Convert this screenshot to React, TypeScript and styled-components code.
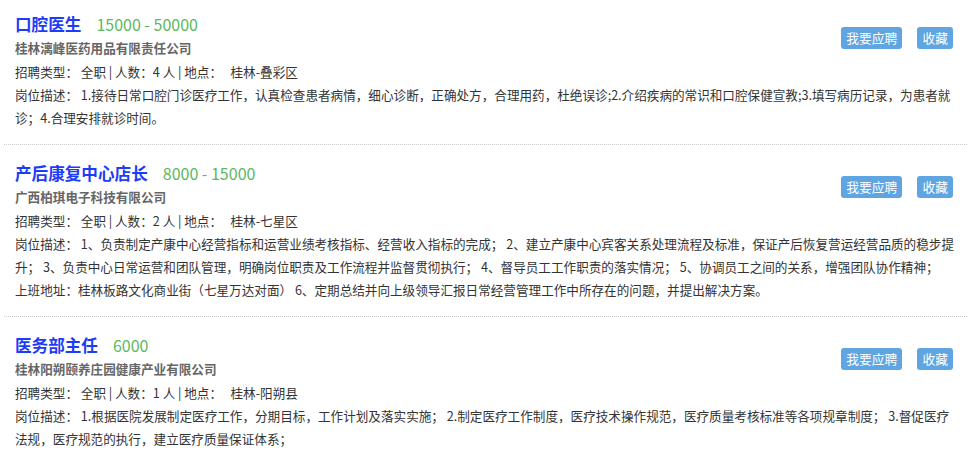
import React from 'react';
import styled, { createGlobalStyle } from 'styled-components';

interface Job {
  title: string;
  salary: string;
  company: string;
  count: number;
  place: string;
  desc: React.ReactNode;
}

const jobs: Job[] = [
  {
    title: '口腔医生',
    salary: '15000 - 50000',
    company: '桂林漓峰医药用品有限责任公司',
    count: 4,
    place: '桂林-叠彩区',
    desc: '1.接待日常口腔门诊医疗工作，认真检查患者病情，细心诊断，正确处方，合理用药，杜绝误诊;2.介绍疾病的常识和口腔保健宣教;3.填写病历记录，为患者就诊；4.合理安排就诊时间。',
  },
  {
    title: '产后康复中心店长',
    salary: '8000 - 15000',
    company: '广西柏琪电子科技有限公司',
    count: 2,
    place: '桂林-七星区',
    desc: (
      <>
        1、负责制定产康中心经营指标和运营业绩考核指标、经营收入指标的完成； 2、建立产康中心宾客关系处理流程及标准，保证产后恢复营运经营品质的稳步提升；
        3、负责中心日常运营和团队管理，明确岗位职责及工作流程并监督贯彻执行； 4、督导员工工作职责的落实情况； 5、协调员工之间的关系，增强团队协作精神；
        <br />
        上班地址：桂林板路文化商业街（七星万达对面） 6、定期总结并向上级领导汇报日常经营管理工作中所存在的问题，并提出解决方案。
      </>
    ),
  },
  {
    title: '医务部主任',
    salary: '6000',
    company: '桂林阳朔颐养庄园健康产业有限公司',
    count: 1,
    place: '桂林-阳朔县',
    desc: '1.根据医院发展制定医疗工作，分期目标，工作计划及落实实施； 2.制定医疗工作制度，医疗技术操作规范，医疗质量考核标准等各项规章制度； 3.督促医疗法规，医疗规范的执行，建立医疗质量保证体系；',
  },
];

const App = () => {
  return (
    <>
      <GlobalStyle />
      <JobList>
        {jobs.map((job) => (
          <JobItem key={job.title}>
            <TitleRow>
              <JobTitle>{job.title}</JobTitle>
              <Salary>{job.salary}</Salary>
            </TitleRow>
            <Company>{job.company}</Company>
            <Actions>
              <ActionButton>我要应聘</ActionButton>
              <ActionButton>收藏</ActionButton>
            </Actions>
            <InfoLine>
              招聘类型：&nbsp;全职 | 人数：{job.count} 人 | 地点：&nbsp;&nbsp;&nbsp;{job.place}
            </InfoLine>
            <InfoLine>岗位描述：&nbsp;{job.desc}</InfoLine>
          </JobItem>
        ))}
      </JobList>
    </>
  );
};

const GlobalStyle = createGlobalStyle`
  body {
    margin: 0;
    background: #fff;
    color: #333;
    font-family: "Noto Sans CJK SC", "Noto Sans", sans-serif;
  }
`;

const JobList = styled.ul`
  list-style: none;
  margin: 0;
  padding: 0 4px;
`;

const JobItem = styled.li`
  display: grid;
  grid-template-columns: 1fr auto;
  padding: 16px 7px 15px 11px;
  border-bottom: 1px dotted #ccc;

  &:first-child {
    padding-top: 12px;
  }
  &:last-child {
    border-bottom: none;
  }
`;

const TitleRow = styled.div`
  grid-column: 1;
  display: flex;
  align-items: baseline;
  height: 24px;
  line-height: 24px;
`;

const JobTitle = styled.span`
  font-size: 16.6px;
  font-weight: bold;
  color: #1d3cf7;
`;

const Salary = styled.span`
  margin-left: 15px;
  font-size: 16px;
  color: #5cb85c;
`;

const Company = styled.div`
  grid-column: 1;
  font-size: 12.6px;
  line-height: 24px;
  font-weight: bold;
  color: #666;
`;

const Actions = styled.div`
  grid-column: 2;
  grid-row: 1 / span 2;
  align-self: start;
  display: flex;
  gap: 15px;
  margin: 15px 7px 0 0;
`;

const ActionButton = styled.button`
  height: 22px;
  padding: 0 5px;
  border: none;
  border-radius: 3px;
  background: #5ea5e2;
  color: #fff;
  font-family: inherit;
  font-size: 12.8px;
  line-height: 22px;
  cursor: pointer;
`;

const InfoLine = styled.div`
  grid-column: 1 / span 2;
  font-size: 12.6px;
  line-height: 23px;
  color: #333;
`;

export default App;
